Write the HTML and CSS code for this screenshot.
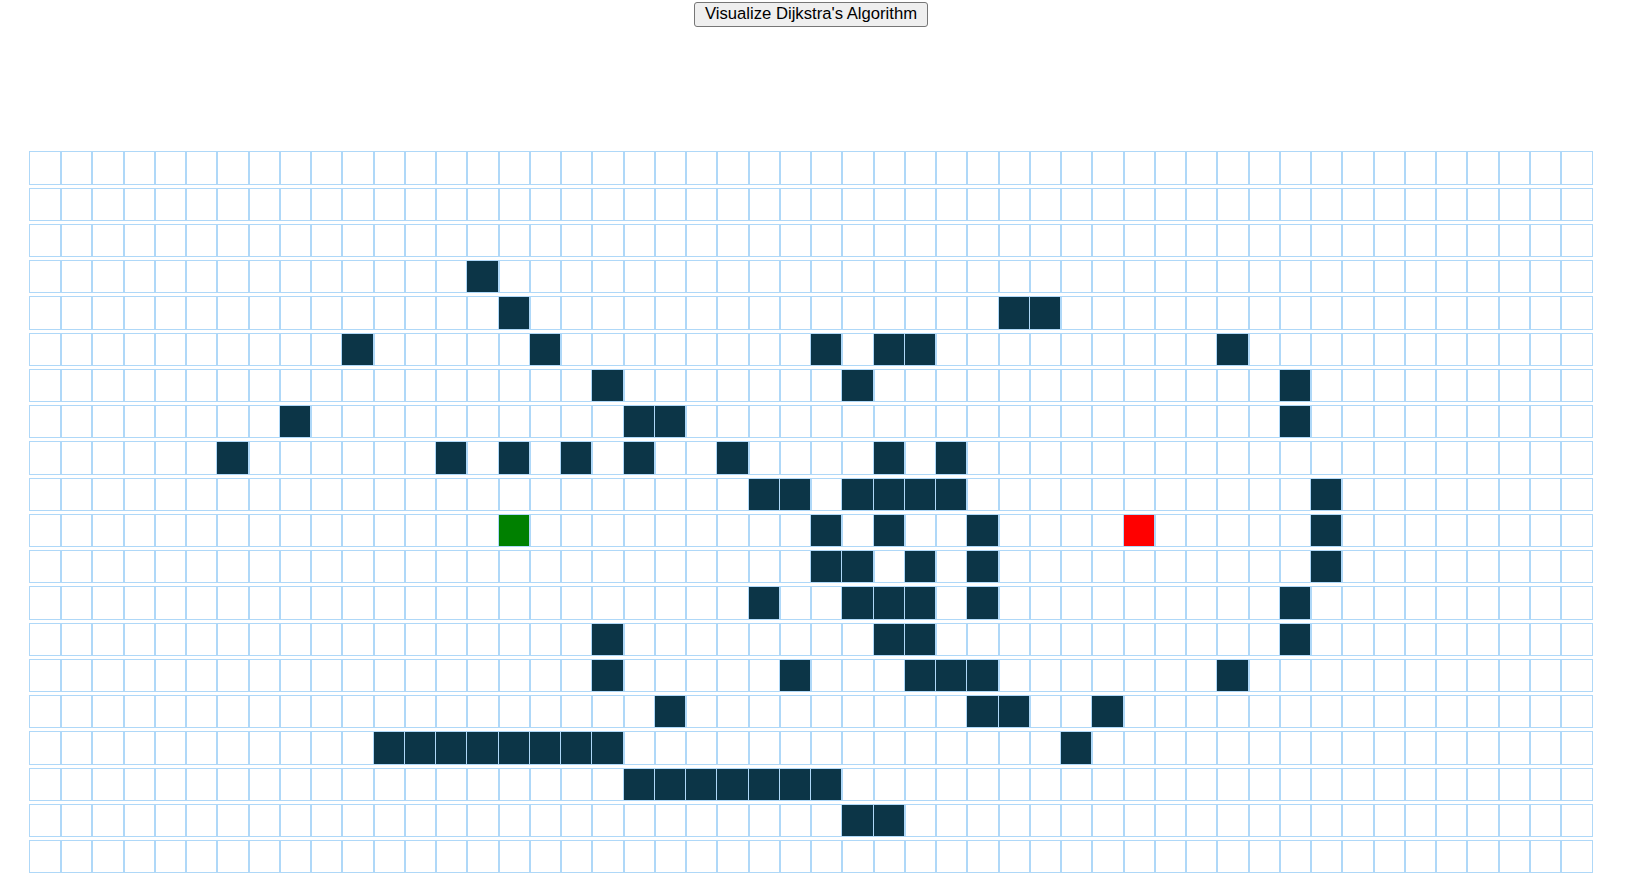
FILE: index.html
```html
<!DOCTYPE html>
<html>
<head>
<meta charset="utf-8">
<title>Pathfinding Visualizer</title>
<link rel="stylesheet" href="styles.css">
</head>
<body>
<div class="app">
  <div class="toolbar">
    <button class="visualize-btn">Visualize Dijkstra's Algorithm</button>
  </div>
  <div class="grid" id="grid"></div>
</div>
<script src="script.js"></script>
</body>
</html>
```

FILE: styles.css
```css
html, body {
  margin: 0;
  padding: 0;
  background: #ffffff;
}

.app {
  margin-left: 29.75px;
  width: 1562.5px;
}

.toolbar {
  display: flex;
  justify-content: center;
  padding-top: 2px;
  height: 25px;
}

.visualize-btn {
  font-family: "Liberation Sans", Arial, sans-serif;
  font-size: 16.67px;
  height: 25px;
  padding: 0 9.5px;
  margin: 0;
  color: #000000;
  background-color: #efefef;
  border: 1px solid #767676;
  border-radius: 3px;
  line-height: 1;
}

.grid {
  margin-top: 125.25px;
  display: flex;
  flex-direction: column;
}

.row {
  display: flex;
  height: 36.25px;
  align-items: flex-start;
}

.node {
  width: 31.25px;
  height: 31.25px;
  flex: 0 0 31.25px;
  outline: 1.25px solid rgb(175, 216, 248);
}

.node-wall {
  background-color: rgb(12, 53, 71);
}

.node-start {
  background-color: #008000;
}

.node-finish {
  background-color: #ff0000;
}
```

FILE: script.js
```js
(function () {
  var ROWS = 20, COLS = 50;
  var walls = {
    3: [14],
    4: [15, 31, 32],
    5: [10, 16, 25, 27, 28, 38],
    6: [18, 26, 40],
    7: [8, 19, 20, 40],
    8: [6, 13, 15, 17, 19, 22, 27, 29],
    9: [23, 24, 26, 27, 28, 29, 41],
    10: [25, 27, 30, 41],
    11: [25, 26, 28, 30, 41],
    12: [23, 26, 27, 28, 30, 40],
    13: [18, 27, 28, 40],
    14: [18, 24, 28, 29, 30, 38],
    15: [20, 30, 31, 34],
    16: [11, 12, 13, 14, 15, 16, 17, 18, 33],
    17: [19, 20, 21, 22, 23, 24, 25],
    18: [26, 27]
  };
  var grid = document.getElementById('grid');
  for (var r = 0; r < ROWS; r++) {
    var row = document.createElement('div');
    row.className = 'row';
    var w = walls[r] || [];
    for (var c = 0; c < COLS; c++) {
      var node = document.createElement('div');
      var cls = 'node';
      if (r === 10 && c === 15) cls += ' node-start';
      else if (r === 10 && c === 35) cls += ' node-finish';
      else if (w.indexOf(c) !== -1) cls += ' node-wall';
      node.className = cls;
      row.appendChild(node);
    }
    grid.appendChild(row);
  }
})();
```
